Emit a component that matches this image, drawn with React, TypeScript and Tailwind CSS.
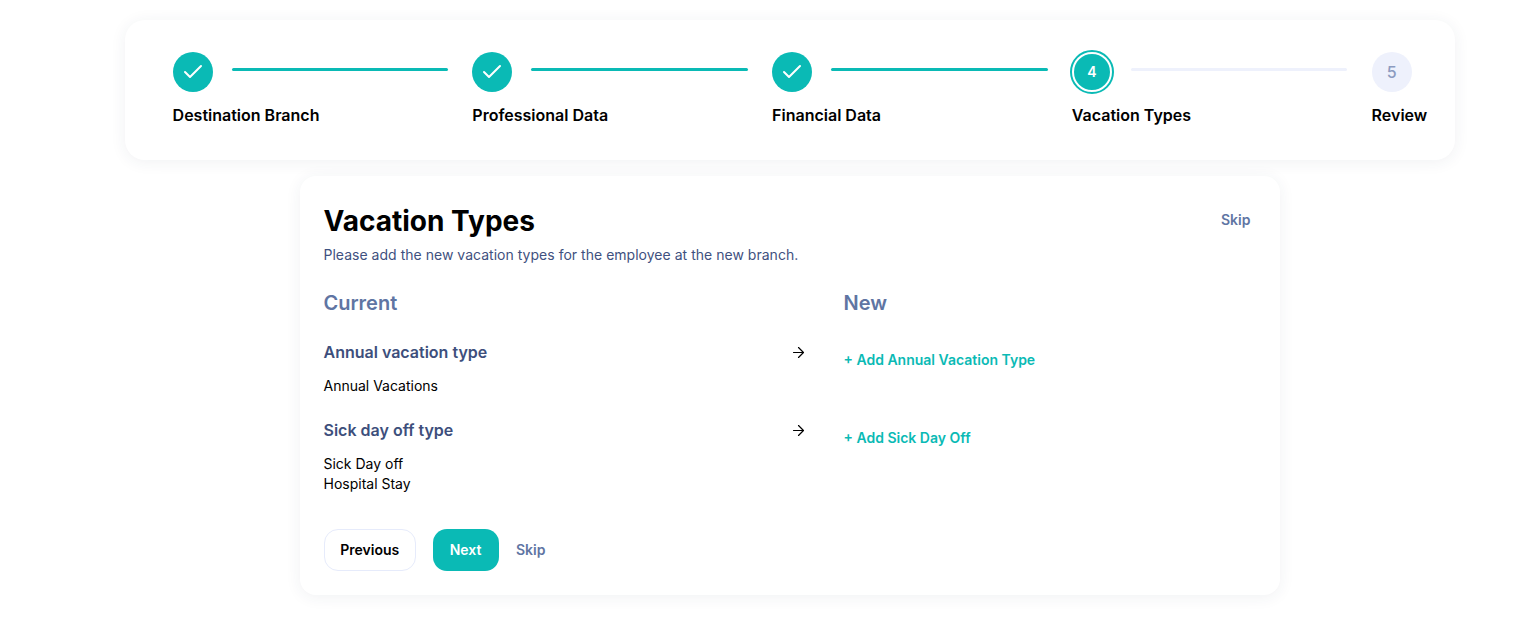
import { Check, ArrowRight } from "lucide-react";

const STEPS = [
  { label: "Destination Branch", state: "done" },
  { label: "Professional Data", state: "done" },
  { label: "Financial Data", state: "done" },
  { label: "Vacation Types", state: "active" },
  { label: "Review", state: "todo" },
];

function StepCircle({ index, state }: { index: number; state: string }) {
  if (state === "done") {
    return (
      <div className="w-10 h-10 shrink-0 rounded-full bg-[#0abab5] flex items-center justify-center text-white">
        <Check size={24} strokeWidth={2} />
      </div>
    );
  }
  if (state === "active") {
    return (
      <div className="w-10 h-10 shrink-0 rounded-full bg-[#0abab5] flex items-center justify-center text-white text-sm font-semibold outline-2 outline-offset-0 outline-[#0abab5] border-2 border-white">
        {index + 1}
      </div>
    );
  }
  return (
    <div className="w-10 h-10 shrink-0 rounded-full bg-[#eef1fc] flex items-center justify-center text-[#8c9bc0] text-base font-medium">
      {index + 1}
    </div>
  );
}

function Row(props: { title: string; items: string[]; action: string }) {
  return (
    <div className="flex items-start">
      <div className="w-[520px]">
        <div className="flex items-start justify-between w-[483.5px] h-[24px]">
          <h3 className="text-base leading-[24px] font-semibold text-[#3d4f7c]">{props.title}</h3>
          <ArrowRight size={17} strokeWidth={1.7} className="text-black mt-[3.5px]" />
        </div>
        <div className="mt-[12px]">
          {props.items.map((item) => (
            <p key={item} className="text-sm leading-[20px] text-black">
              {item}
            </p>
          ))}
        </div>
      </div>
      <button className="mt-[10px] text-sm leading-[20px] font-semibold text-[#0abab5]">
        {props.action}
      </button>
    </div>
  );
}

export default function App() {
  return (
    <div className="w-[1540px] h-[622px] bg-white font-['Inter',sans-serif] overflow-hidden pt-[20px]">
      <section className="ml-[125px] w-[1330px] h-[140px] bg-white rounded-[20px] shadow-[0_2px_16px_rgba(40,50,90,0.07)] pt-[32px] pl-[47.6px] flex">
        {STEPS.map((step, i) => (
          <div key={step.label} className={i < 4 ? "w-[299.75px] shrink-0" : "shrink-0"}>
            <div className="flex items-start">
              <StepCircle index={i} state={step.state} />
              {i < 4 && (
                <div
                  className={
                    step.state === "done"
                      ? "h-[3px] mt-[15.5px] ml-[19px] w-[216.5px] rounded-full bg-[#0abab5]"
                      : "h-[3px] mt-[15.5px] ml-[19px] w-[216.5px] rounded-full bg-[#eef1fc]"
                  }
                />
              )}
            </div>
            <p className="mt-[13px] text-base leading-[20px] font-semibold text-black whitespace-nowrap">
              {step.label}
            </p>
          </div>
        ))}
      </section>

      <section className="ml-[300px] mt-[16px] w-[980px] h-[419px] bg-white rounded-[16px] shadow-[0_2px_16px_rgba(40,50,90,0.07)] pt-[24px] pl-[23.5px] pr-[29.5px]">
        <div className="flex items-start justify-between">
          <h1 className="text-[28px] leading-[42px] font-bold text-black">Vacation Types</h1>
          <button className="mt-[10px] text-sm leading-[20px] font-semibold text-[#5f75a3]">Skip</button>
        </div>
        <p className="mt-[3px] text-sm leading-[20px] tracking-[0.02px] text-[#3f5180]">
          Please add the new vacation types for the employee at the new branch.
        </p>

        <div className="flex mt-[24px] h-[28px]">
          <h2 className="w-[520px] text-xl leading-[28px] font-semibold text-[#5f75a3]">Current</h2>
          <h2 className="text-xl leading-[28px] font-semibold text-[#5f75a3]">New</h2>
        </div>

        <div className="mt-[23px] flex flex-col gap-[22px]">
          <Row title="Annual vacation type" items={["Annual Vacations"]} action="+ Add Annual Vacation Type" />
          <Row title="Sick day off type" items={["Sick Day off", "Hospital Stay"]} action="+ Add Sick Day Off" />
        </div>

        <div className="mt-[35px] flex items-center">
          <button className="w-[92.5px] h-[42px] rounded-[14px] border border-[#e6ebfb] bg-white text-sm font-semibold text-black">
            Previous
          </button>
          <button className="ml-[16.5px] w-[66px] h-[42px] rounded-[14px] bg-[#0abab5] text-sm font-semibold text-white">
            Next
          </button>
          <button className="ml-[17.5px] text-sm font-semibold text-[#5f75a3]">Skip</button>
        </div>
      </section>
    </div>
  );
}
